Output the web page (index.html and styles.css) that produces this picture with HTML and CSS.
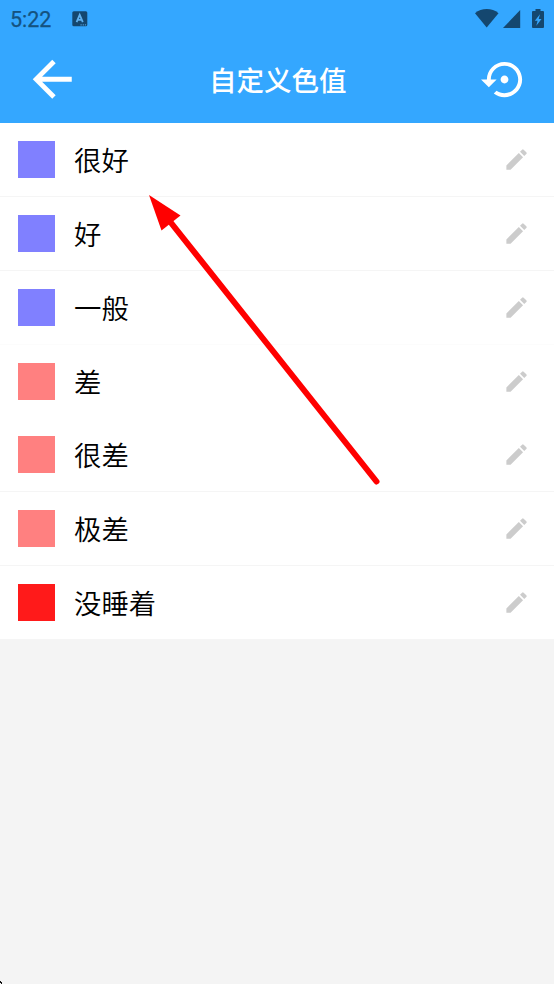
FILE: index.html
```html
<!DOCTYPE html>
<html lang="zh-CN">
<head>
<meta charset="utf-8">
<title>自定义色值</title>
<link rel="stylesheet" href="styles.css">
</head>
<body>
<svg class="defs" width="0" height="0"><symbol id="pencil" viewBox="0 0 24 24"><path d="M3 17.25V21h3.75L17.81 9.94l-3.75-3.75L3 17.25zM20.71 7.04a1 1 0 0 0 0-1.41l-2.34-2.34a1 1 0 0 0-1.41 0l-1.83 1.83 3.75 3.75 1.83-1.83z"/></symbol></svg>
<header class="top">
  <div class="status">
    <span class="time">5:22</span>
    <svg class="app" viewBox="0 0 16 16"><rect x=".3" y=".3" width="15" height="15" rx="1.5" fill="#14476f"/><path d="M4.6 11.2 7.7 3.8 10.8 11.2M5.7 8.9h4" fill="none" stroke="#5fb0ee" stroke-width="1.8"/><path d="M8.5 13.9h1.2m1 0h1.2m1 0h1.2" stroke="#5fb0ee" stroke-width="1"/></svg>
    <svg class="system" viewBox="0 0 70 20" fill="#14476f"><path d="M0 4.2C6.5-1.3 17-1.3 23.500 4.200L11.700 18.500z"/><path d="M28 19H45.200V1z"/><path fill-rule="evenodd" d="M60.500 0h5v2H68q1 0 1 1V18q0 1-1 1H58q-1 0-1-1V3q0-1 1-1h2.500zM65 5.200 59.800 11.700h2.800l-1.300 5.100 5.200-6.800h-2.800z"/></svg>
  </div>
  <div class="bar">
    <svg class="back" viewBox="0 0 24 24"><path d="M20 11H7.830l5.590-5.590L12 4l-8 8 8 8 1.410-1.410L7.830 13H20z"/></svg>
    <h1>自定义色值</h1>
    <svg class="restore" viewBox="0 0 24 24"><path d="M14 12c0-1.100-.9-2-2-2s-2 .9-2 2 .9 2 2 2 2-.9 2-2zm-2-9c-4.970 0-9 4.030-9 9H0l4 4 4-4H5c0-3.870 3.130-7 7-7s7 3.130 7 7-3.130 7-7 7c-1.510 0-2.910-.49-4.060-1.300l-1.420 1.440C8.040 20.300 9.940 21 12 21c4.970 0 9-4.030 9-9s-4.030-9-9-9z"/></svg>
  </div>
</header>
<main class="list">
  <div class="row"><i class="swatch blue"></i><span>很好</span><svg class="edit"><use href="#pencil"/></svg></div>
  <div class="row"><i class="swatch blue"></i><span>好</span><svg class="edit"><use href="#pencil"/></svg></div>
  <div class="row faint"><i class="swatch blue"></i><span>一般</span><svg class="edit"><use href="#pencil"/></svg></div>
  <div class="row plain"><i class="swatch pink"></i><span>差</span><svg class="edit"><use href="#pencil"/></svg></div>
  <div class="row"><i class="swatch pink"></i><span>很差</span><svg class="edit"><use href="#pencil"/></svg></div>
  <div class="row"><i class="swatch pink"></i><span>极差</span><svg class="edit"><use href="#pencil"/></svg></div>
  <div class="row"><i class="swatch red"></i><span>没睡着</span><svg class="edit"><use href="#pencil"/></svg></div>
</main>
<svg class="pointer" viewBox="0 0 554 984"><path d="M168 219 376.500 481.500" stroke="#f00" stroke-width="6" stroke-linecap="round"/><path d="M149 195 180.500 215.500 161.500 230.500z" fill="#f00"/><path d="M0 981h1v1h1v2H1v-1H0z" fill="#111"/></svg>
</body>
</html>
```

FILE: styles.css
```css
body {
  margin: 0;
  height: 984px;
  overflow: hidden;
  background: #f4f4f4;
  font-family: Roboto, "Noto Sans CJK SC", sans-serif;
}

svg { display: block; flex: none; }
.defs { position: absolute; }

.top {
  height: 123px;
  background: #34a7ff;
}

.status {
  display: flex;
  align-items: center;
  height: 37px;
  padding: 0 9px 0 10px;
  box-sizing: border-box;
}

.time {
  width: 62px;
  font-size: 21.5px;
  line-height: 25px;
  padding-top: 1px;
  color: #14527f;
  -webkit-text-stroke: .25px #14527f;
}

.app { width: 16px; height: 16px; }
.system { width: 70px; height: 20px; margin-left: auto; }

.bar {
  display: flex;
  align-items: center;
  height: 85px;
  padding: 0 26.5px 0 23px;
}

.back { width: 58.5px; height: 58.5px; fill: #fff; }
.restore { width: 47px; height: 47px; margin-left: auto; fill: #fff; }

h1 {
  margin: 0 0 0 127.5px;
  padding-top: 5px;
  font-size: 27.5px;
  line-height: 40px;
  font-weight: 500;
  color: #fff;
}

.list {
  padding-top: .3px;
  background: #fff;
}

.row {
  display: flex;
  align-items: center;
  height: 73.75px;
  padding: .6px 24px 0 18px;
  box-sizing: border-box;
  border-bottom: 1px solid #f5f5f5;
  font-size: 27.4px;
  line-height: 40px;
  font-weight: 350;
  color: #000;
}

.row span { padding-top: 5px; }
.faint { border-bottom-color: #fcfcfc; }
.plain { border-bottom-color: #fff; }

.swatch {
  width: 37px;
  height: 37px;
  margin-right: 19px;
}

.blue { background: #8080ff; }
.pink { background: #ff8080; }
.red { background: #ff1a1a; }

.edit {
  width: 27px;
  height: 27px;
  margin-left: auto;
  fill: #ccc;
}

.pointer {
  position: absolute;
  top: 0;
  left: 0;
  width: 554px;
  height: 984px;
  pointer-events: none;
}
```
